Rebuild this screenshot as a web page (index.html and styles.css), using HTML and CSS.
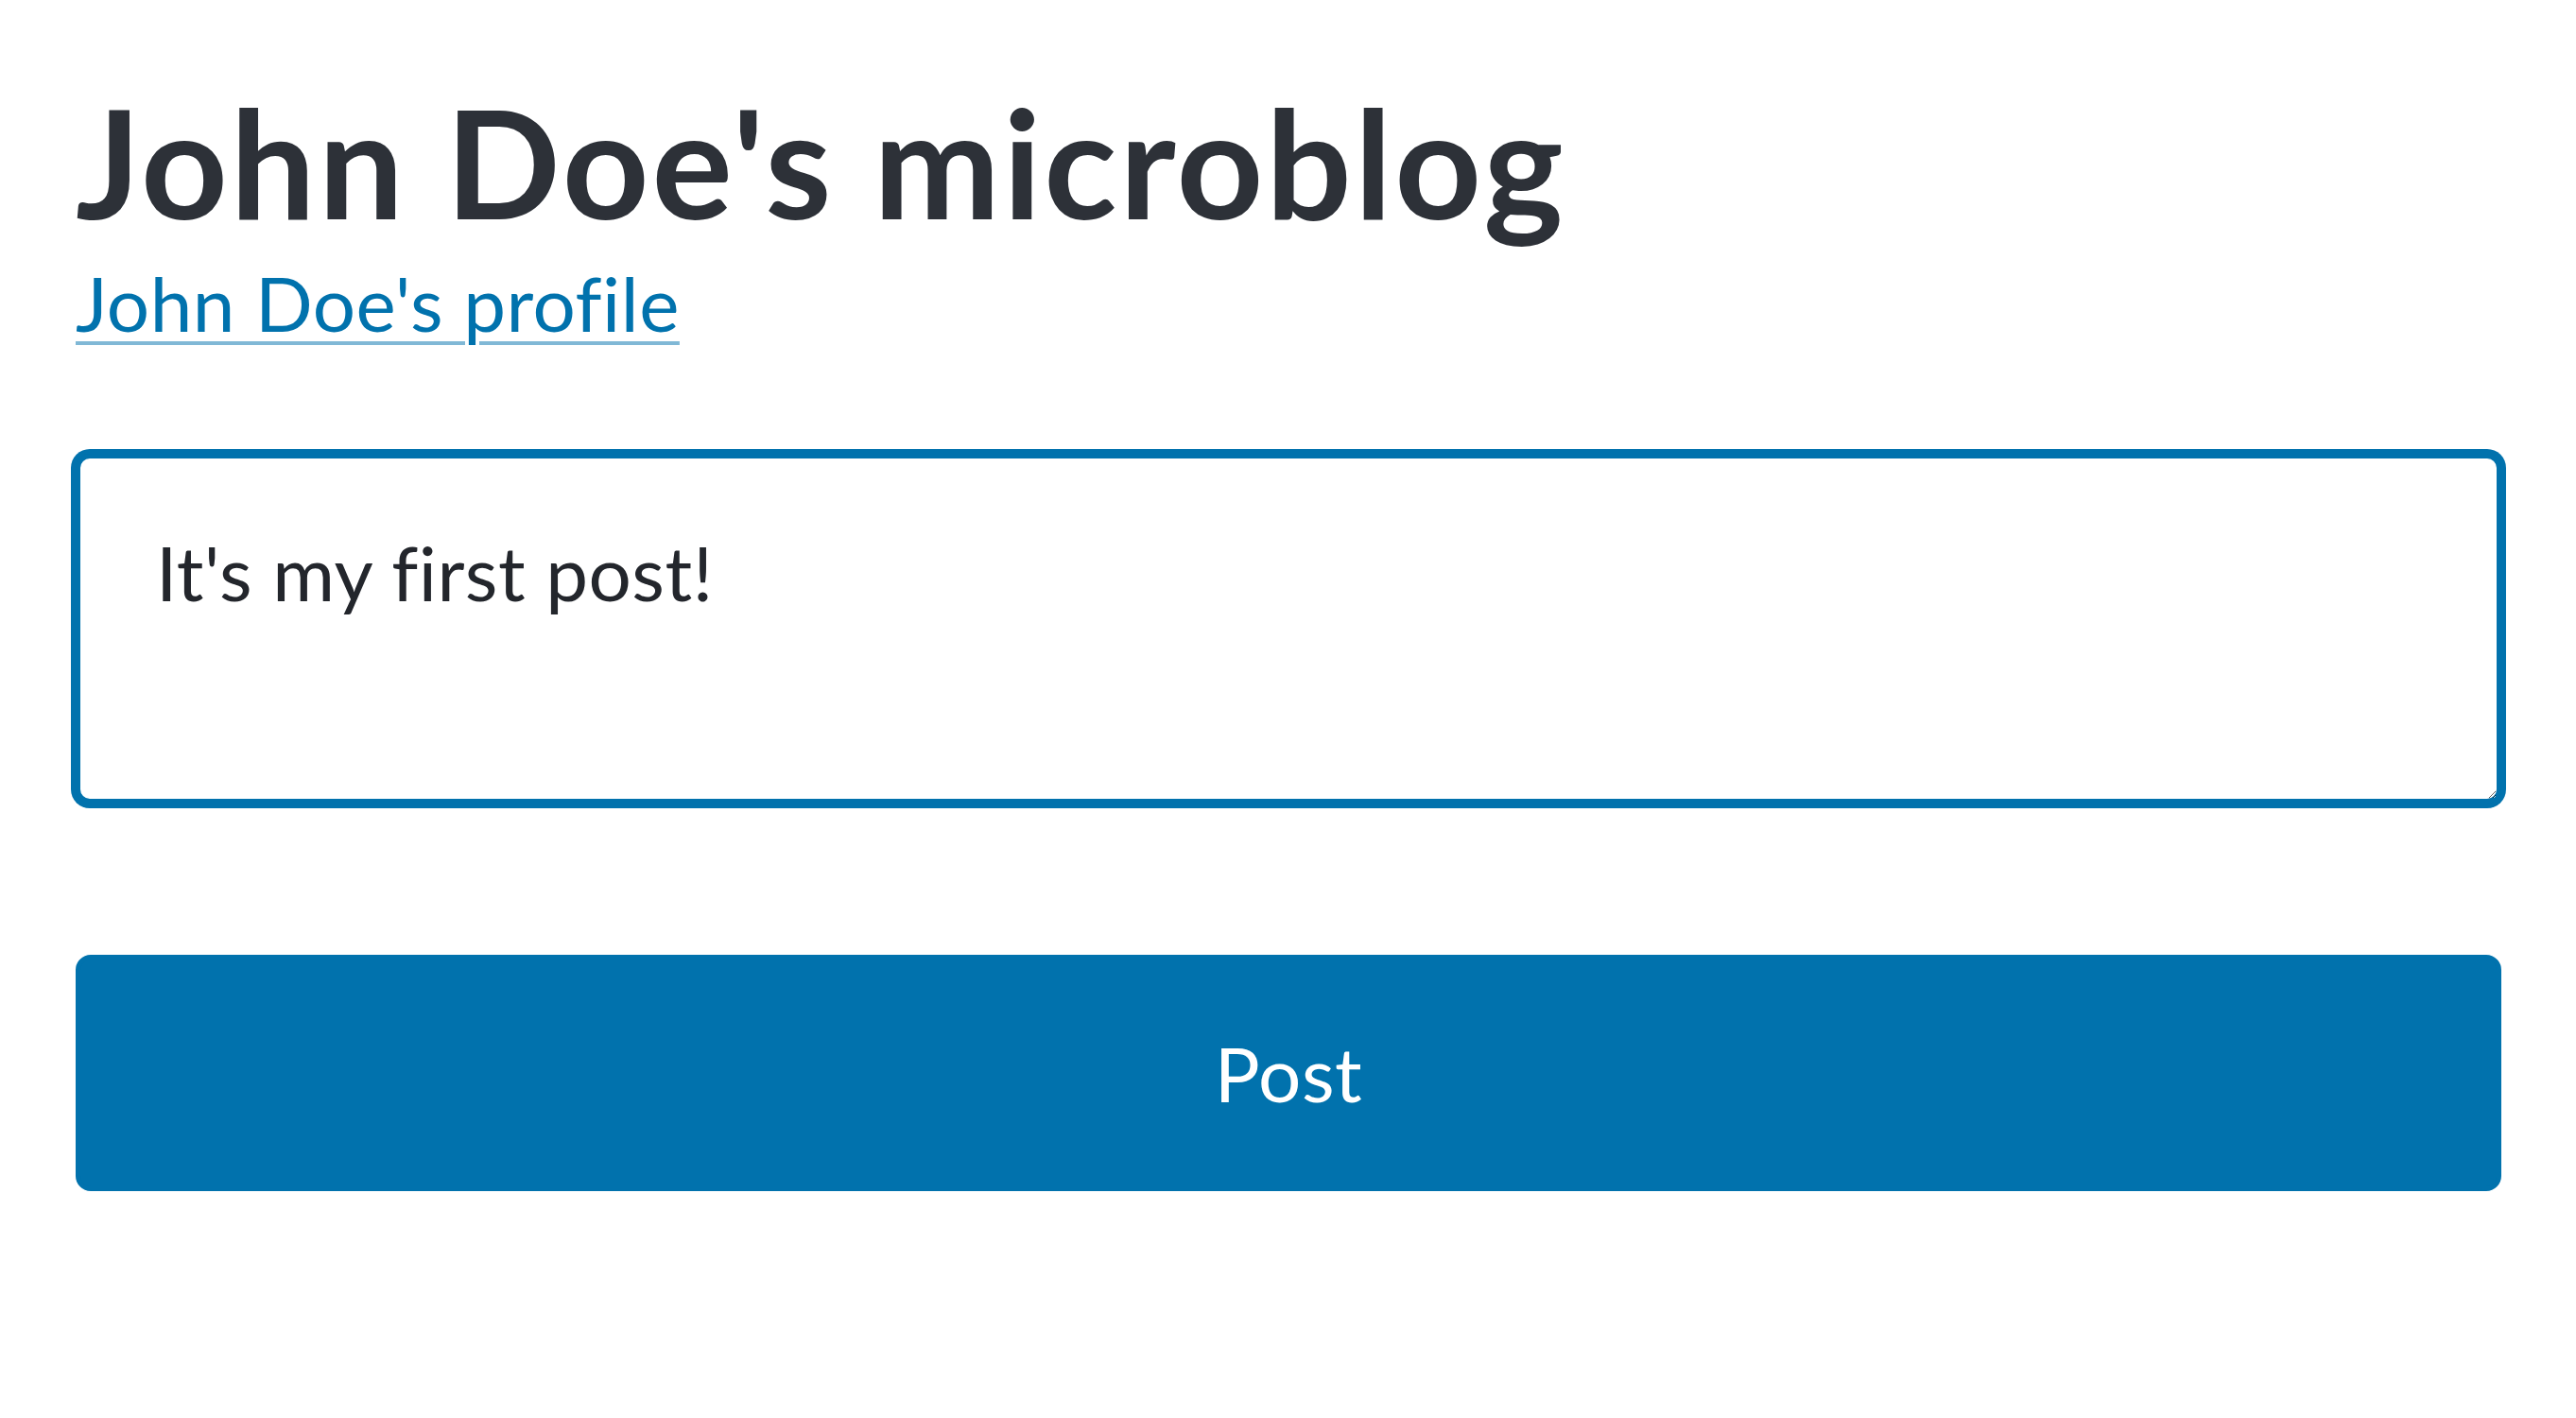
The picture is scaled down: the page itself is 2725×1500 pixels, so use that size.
FILE: index.html
```html
<!DOCTYPE html>
<html lang="en">
<head>
<meta charset="utf-8">
<title>John Doe's microblog</title>
<link rel="stylesheet" href="styles.css">
</head>
<body>
<main class="container">
  <header class="page-head">
    <h1 class="title">John Doe's microblog</h1>
    <p class="profile"><a class="profile-link" href="#">John Doe's profile</a></p>
  </header>
  <form class="post-form">
    <textarea class="post-input" rows="2">It's my first post!</textarea>
    <button class="post-button" type="button">Post</button>
  </form>
</main>
</body>
</html>
```
FILE: styles.css
```css
html, body {
  margin: 0;
  padding: 0;
  background: #ffffff;
}

body {
  font-family: "Lato", "Roboto", sans-serif;
  font-size: 80px;
  line-height: 1.5;
  color: #373c44;
}

.container {
  padding: 80px 79px 0 80px;
}

.page-head {
  margin: 0 0 100px 0;
}

.title {
  margin: 0;
  font-size: 160px;
  line-height: 1.125;
  font-weight: 700;
  letter-spacing: 2.8px;
  color: #2d3138;
}

.profile {
  margin: 0;
  line-height: 1.5;
}

.profile-link {
  color: #0172ad;
  letter-spacing: 0.5px;
  text-decoration: underline;
  text-decoration-color: rgba(1, 114, 173, 0.5);
  text-decoration-thickness: 4px;
  text-underline-offset: 10px;
}

.post-form {
  display: flex;
  flex-direction: column;
  gap: 160px;
  margin: 0;
}

.post-input {
  display: block;
  box-sizing: border-box;
  width: 100%;
  height: 370px;
  margin: 0;
  padding: 60px 80px;
  border: 5px solid #0172ad;
  border-radius: 15px;
  box-shadow: 0 0 0 5px #0172ad;
  outline: none;
  background: #ffffff;
  color: #23262c;
  font-family: inherit;
  font-size: 80px;
  line-height: 1.5;
  letter-spacing: 0.5px;
}

.post-button {
  display: block;
  box-sizing: border-box;
  width: 100%;
  height: 250px;
  margin: 0;
  padding: 60px 80px;
  border: 5px solid #0172ad;
  border-radius: 16px;
  background: #0172ad;
  color: #ffffff;
  font-family: inherit;
  font-size: 80px;
  line-height: 1.5;
  letter-spacing: 0.5px;
  cursor: pointer;
}
```
